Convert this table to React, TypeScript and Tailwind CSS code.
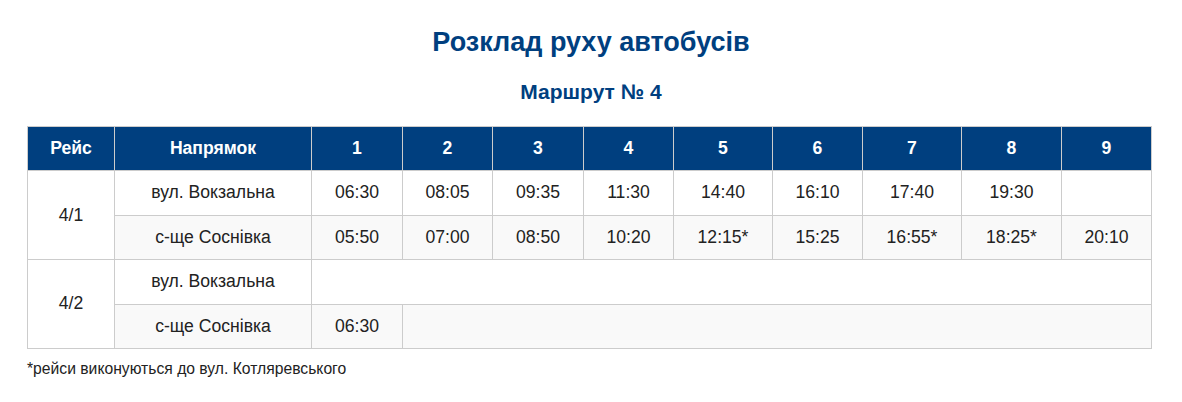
const widths = [87, 197, 91, 90, 91, 90, 99, 90, 99, 100, 90];

const headers = ["Рейс", "Напрямок", "1", "2", "3", "4", "5", "6", "7", "8", "9"];

const td = "border border-[#cccccc] px-2 py-3 text-center leading-[19.4px]";

export default function App() {
  return (
    <div className="min-h-screen bg-white font-['Liberation_Sans',Arial,sans-serif] text-[17.6px] text-[#222]">
      <h1 className="pt-[27px] text-center text-[27px] font-bold leading-[30px] text-[#003f7f]">
        Розклад руху автобусів
      </h1>
      <h2 className="mt-[23px] text-center text-[21px] font-bold leading-[23px] text-[#003f7f]">
        Маршрут № 4
      </h2>
      <table className="ml-[27px] mt-[23px] w-[1124px] table-fixed border-collapse">
        <colgroup>
          {widths.map((w, i) => (
            <col key={i} style={{ width: w }} />
          ))}
        </colgroup>
        <thead>
          <tr className="bg-[#003f7f] text-white">
            {headers.map((h) => (
              <th key={h} className={`${td} font-bold`}>
                {h}
              </th>
            ))}
          </tr>
        </thead>
        <tbody>
          <tr className="bg-white">
            <td rowSpan={2} className={td}>
              4/1
            </td>
            <td className={td}>вул. Вокзальна</td>
            {["06:30", "08:05", "09:35", "11:30", "14:40", "16:10", "17:40", "19:30", ""].map((t, i) => (
              <td key={i} className={td}>
                {t}
              </td>
            ))}
          </tr>
          <tr className="bg-[#f9f9f9]">
            <td className={td}>с-ще Соснівка</td>
            {["05:50", "07:00", "08:50", "10:20", "12:15*", "15:25", "16:55*", "18:25*", "20:10"].map((t, i) => (
              <td key={i} className={td}>
                {t}
              </td>
            ))}
          </tr>
          <tr className="bg-white">
            <td rowSpan={2} className={td}>
              4/2
            </td>
            <td className={td}>вул. Вокзальна</td>
            <td colSpan={9} className={td}></td>
          </tr>
          <tr className="bg-[#f9f9f9]">
            <td className={td}>с-ще Соснівка</td>
            <td className={td}>06:30</td>
            <td colSpan={8} className={td}></td>
          </tr>
        </tbody>
      </table>
      <p className="ml-[27px] mt-3 text-[15.7px] leading-4">*рейси виконуються до вул. Котляревського</p>
    </div>
  );
}
